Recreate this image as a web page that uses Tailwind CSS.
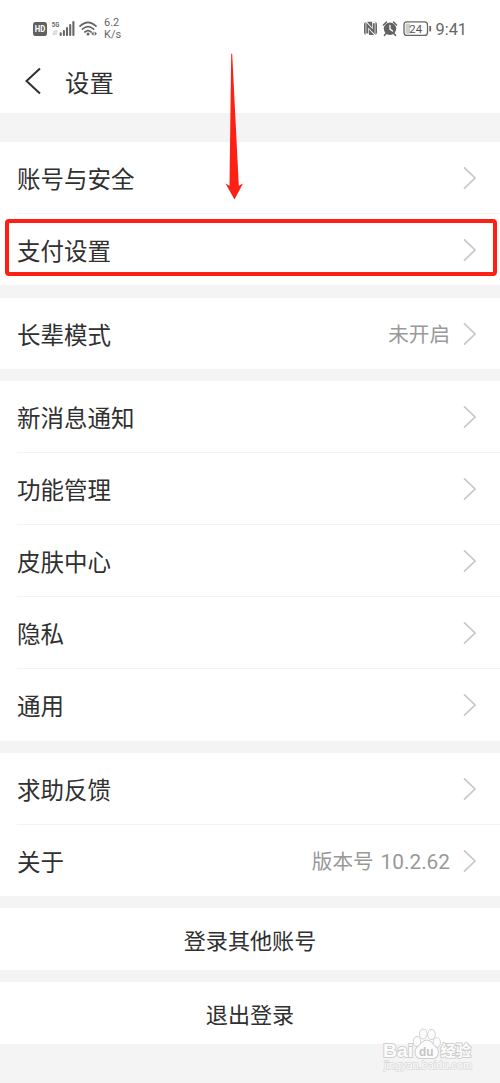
<!DOCTYPE html>
<html lang="zh-CN">
<head>
<meta charset="utf-8">
<title>设置</title>
<script src="https://cdn.jsdelivr.net/npm/@tailwindcss/browser@4"></script>
</head>
<body class="bg-[#f4f4f4]">
<svg class="hidden"><symbol id="chev" viewBox="0 0 14 24"><path d="M1 1.3 L12 12 L1 22.7" fill="none" stroke="#c8c8c8" stroke-width="1.7"/></symbol></svg>
<div class="relative flex h-[1083px] w-[500px] flex-col overflow-hidden bg-[#f4f4f4] font-['Noto_Sans_CJK_SC',sans-serif] text-[23.5px] leading-none text-[#303030]">
  <header class="h-[113px] shrink-0 bg-white">
    <div class="flex h-[57px] items-center justify-between pr-[33px] pl-8 text-[#666]">
      <div class="flex items-center">
        <svg class="h-[57px] w-[66px]" viewBox="32 0 66 57">
          <rect x="33" y="22" width="14" height="14" rx="2.8" fill="#606060"/>
          <text x="40" y="32.2" text-anchor="middle" font-family="Roboto" font-size="8.4" font-weight="700" fill="#fff" textLength="10.5" lengthAdjust="spacingAndGlyphs">HD</text>
          <text x="51.8" y="27.4" font-family="Roboto" font-size="8" font-weight="700" fill="#666" textLength="7.5" lengthAdjust="spacingAndGlyphs">5G</text>
          <path d="M54 30.5v4.5l-1.3-1.3M56 35v-4.5l1.3 1.3" stroke="#bbb" stroke-width=".9" fill="none"/>
          <path d="M60.7 33.3v1.7M63.9 31v4M67 28v7M70.2 25v10M73.4 22v13" stroke="#666" stroke-width="2.1" stroke-linecap="round"/>
          <path d="M80 26.2q8-7.8 16 0M82.4 29.2q5.6-5.3 11.2 0M84.9 32q3.1-2.7 6.2 0" stroke="#666" stroke-width="1.7" stroke-linecap="round" fill="none"/>
          <circle cx="88" cy="34" r="1.5" fill="#666"/>
          <path d="M93.6 31.6v4.2l-2.4-2.1zM94.6 31.6v4.2l2.4-2.1z" fill="#666"/>
        </svg>
        <div class="ml-[6px] pt-px font-[Roboto] text-[11px] leading-[12.5px]">6.2<br>K/s</div>
      </div>
      <div class="flex items-center">
        <svg class="h-[57px] w-[70px]" viewBox="363 0 70 57">
          <rect x="364" y="21.8" width="13" height="13.2" rx="3" fill="#666"/>
          <path d="M367.3 35.2V24.8L373.7 32V21.6" stroke="#fff" stroke-width="3.4" fill="none"/>
          <path d="M367.3 33.6V25L373.7 31.8V23.2" stroke="#666" stroke-width="2" fill="none"/>
          <circle cx="390" cy="28.8" r="6.2" fill="#626262"/>
          <path d="M383.5 25l3-3M393.5 22l3 3M385.8 33.8l-1.3 1.5M394.2 33.8l1.3 1.5" stroke="#626262" stroke-width="1.6" stroke-linecap="round"/>
          <path d="M390 25.3v3.8l2.5 2" stroke="#fff" stroke-width="1.3" fill="none" stroke-linecap="round"/>
          <rect x="404" y="21.8" width="23.5" height="13.6" rx="3" fill="#fff" stroke="#666" stroke-width="1.3"/>
          <path d="M407 23.5h3v10.2h-3q-1.5 0-1.5-1.5v-7.2q0-1.5 1.5-1.5z" fill="#ccc"/>
          <text x="415.7" y="32.5" text-anchor="middle" font-family="Roboto" font-size="11.3" fill="#555">24</text>
          <path d="M430.2 26v5.4" stroke="#666" stroke-width="1.8"/>
        </svg>
        <div class="ml-[3px] pt-[3px] font-[Roboto] text-[16.3px]">9:41</div>
      </div>
    </div>
    <div class="flex h-[50px] items-center pl-6">
      <svg class="mb-[2px] h-7 w-[18px]" viewBox="0 0 18 28"><path d="M16 1.5L2.5 14L16 26.5" fill="none" stroke="#303030" stroke-width="2"/></svg>
      <h1 class="ml-[23px] text-[24.4px] font-normal">设置</h1>
    </div>
  </header>

  <main class="flex flex-col gap-3 pt-[29px]">
    <section class="mb-px bg-white">
      <div class="flex h-[71px] items-center justify-between pr-[23px] pl-[17px]"><span class="pt-[3px]">账号与安全</span><svg class="h-6 w-[14px]"><use href="#chev"/></svg></div>
      <div class="ml-[17px] flex h-[72px] items-center justify-between border-t border-[#f3f3f3] pr-[23px]"><span class="pt-[3px]">支付设置</span><svg class="h-6 w-[14px]"><use href="#chev"/></svg></div>
    </section>
    <section class="flex h-[71px] items-center bg-white pr-[23px] pl-[17px]">
      <span class="grow pt-[2px]">长辈模式</span><span class="mr-[13px] text-[20.6px] text-[#999]">未开启</span><svg class="h-6 w-[14px]"><use href="#chev"/></svg>
    </section>
    <section class="bg-white">
      <div class="flex h-[71px] items-center justify-between pr-[23px] pl-[17px]"><span class="pt-[2px]">新消息通知</span><svg class="h-6 w-[14px]"><use href="#chev"/></svg></div>
      <div class="ml-[17px] flex h-[72px] items-center justify-between border-t border-[#f3f3f3] pr-[23px]"><span class="pt-[2px]">功能管理</span><svg class="h-6 w-[14px]"><use href="#chev"/></svg></div>
      <div class="ml-[17px] flex h-[72px] items-center justify-between border-t border-[#f3f3f3] pr-[23px]"><span class="pt-[2px]">皮肤中心</span><svg class="h-6 w-[14px]"><use href="#chev"/></svg></div>
      <div class="ml-[17px] flex h-[72px] items-center justify-between border-t border-[#f3f3f3] pr-[23px]"><span class="pt-[2px]">隐私</span><svg class="h-6 w-[14px]"><use href="#chev"/></svg></div>
      <div class="ml-[17px] flex h-[73px] items-center justify-between border-t border-[#f3f3f3] pr-[23px]"><span class="pt-[2px]">通用</span><svg class="h-6 w-[14px]"><use href="#chev"/></svg></div>
    </section>
    <section class="bg-white">
      <div class="flex h-[71px] items-center justify-between pr-[23px] pl-[17px]"><span class="pt-[2px]">求助反馈</span><svg class="h-6 w-[14px]"><use href="#chev"/></svg></div>
      <div class="ml-[17px] flex h-[72px] items-center border-t border-[#f3f3f3] pr-[23px]"><span class="grow pt-[2px]">关于</span><span class="mr-[13px] flex items-baseline gap-[7px] pt-px text-[20.6px] text-[#999]"><span>版本号</span> <span class="font-[Roboto] text-[20.8px]">10.2.62</span></span><svg class="h-6 w-[14px]"><use href="#chev"/></svg></div>
    </section>
    <button class="flex h-[62px] items-center justify-center bg-white text-[22.1px]">登录其他账号</button>
    <button class="flex h-[62px] items-center justify-center bg-white text-[22.1px]">退出登录</button>
  </main>

  <!-- Highlight frame and pointer over the payment row -->
  <div class="absolute top-[219px] left-[5px] h-[57px] w-[492px] rounded-[4px] border-4 border-[#ff2015]"></div>
  <svg class="absolute top-[52px] left-[222px] h-[150px] w-[24px]" viewBox="222 52 24 150"><path d="M231.2 54Q231.7 52.8 232.2 54L238.8 185.8L243 183.5L234.5 199.5L225.5 183.5L229.5 185.8Z" fill="#ff2015"/></svg>

  <!-- Watermark -->
  <svg class="absolute top-[1024px] left-[378px] h-[52px] w-[108px]" viewBox="378 1024 108 52" fill="#fcfcfc" stroke="#cecece" stroke-width="1.8" paint-order="stroke">
    <ellipse cx="417" cy="1041.5" rx="3.3" ry="4.5"/><ellipse cx="423.3" cy="1034" rx="3.3" ry="4.6"/><ellipse cx="431.5" cy="1034.5" rx="3.3" ry="4.6"/><ellipse cx="436.7" cy="1042.5" rx="3.2" ry="4.4"/>
    <path d="M427 1040.5c-4 0-6 4-9 6.5-4.5 4-2.5 11 2.5 11h12.5c5 0 7-7 2.5-11-3-2.5-4.5-6.5-8.5-6.5z"/>
    <text x="383" y="1057" font-family="Liberation Sans" font-weight="700" font-size="19" textLength="30" lengthAdjust="spacingAndGlyphs">Bai</text>
    <text x="419" y="1055.5" font-family="Liberation Sans" font-weight="700" font-size="13" textLength="14.5" lengthAdjust="spacingAndGlyphs" fill="#c4c4c4" stroke="none">du</text>
    <text x="440.5" y="1056" font-family="Noto Sans CJK SC" font-weight="700" font-size="15.3">经验</text>
    <text x="384" y="1069" font-family="Liberation Sans" font-size="10" textLength="88" lengthAdjust="spacingAndGlyphs" stroke="#dadada" stroke-width="1.3">jingyan.baidu.com</text>
  </svg>
</div>
</body>
</html>
